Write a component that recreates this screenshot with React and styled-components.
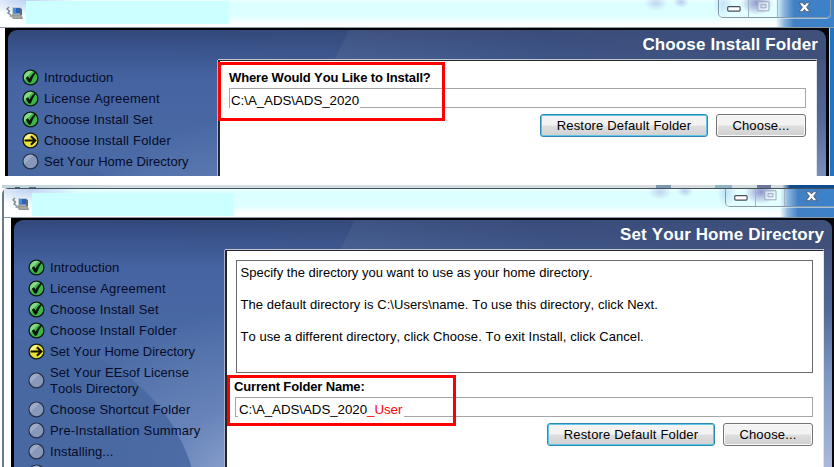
import React from "react";
import styled, { createGlobalStyle } from "styled-components";

const Global = createGlobalStyle`
  * { box-sizing: border-box; }
  body { margin: 0; background: #fff; overflow: hidden; }
`;

const Page = styled.main`
  display: flex;
  flex-direction: column;
  gap: 9px;
  width: 834px;
  height: 467px;
  overflow: hidden;
  background: #fff;
  color: #000;
  font: 13px/15px "Liberation Sans", Arial, sans-serif;
  font-kerning: none;
  white-space: pre;
`;

const Shot = styled.section`
  flex: none;
  height: ${(p) => p.$height}px;
  margin-left: ${(p) => p.$left}px;
  overflow: hidden;
`;

const Desktop = styled.div`
  height: 3px;
  background:
    linear-gradient(90deg, transparent 13px, #51616c 13px 18px, transparent 18px 27px, #5e6e79 27px 34px, transparent 34px) 0 2px / 100% 1px no-repeat,
    linear-gradient(90deg, transparent 654px, #7d98ae 654px 669px, transparent 669px 713px, #8fb4c2 713px 730px, transparent 730px 755px, #6d769c 755px 769px, transparent 769px),
    linear-gradient(90deg, #bfd3df 0, #d3dde2 120px, #d5dcdf 780px, #0d4c8e 788px);
`;

const Glass = styled.div`
  height: 100%;
  display: flex;
  flex-direction: column;
  border-left: ${(p) => (p.$framed ? "2px solid #6c7a83" : "0")};
  border-top: ${(p) => (p.$framed ? "1px solid #43525c" : "0")};
  border-radius: ${(p) => (p.$framed ? "6px 0 0 0" : "0")};
  background: #fff;
`;

const TitleBar = styled.header`
  flex: none;
  display: flex;
  align-items: flex-start;
  height: ${(p) => p.$height}px;
  border-bottom: 1px solid #8c9aa3;
  background:
    radial-gradient(ellipse 12px 8px at 656px 3px, #aebde8a0, transparent),
    radial-gradient(ellipse 8px 6px at 681px 2px, #a4b0e6a0, transparent),
    radial-gradient(ellipse 10px 14px at 723px 4px, #a5cef0b0, transparent),
    radial-gradient(ellipse 16px 12px at 757px 3px, #747fc2, transparent),
    linear-gradient(90deg, transparent 776px, #8cb6de 784px, #4280c4 794px, #3b82ca 100%),
    radial-gradient(ellipse 50px 16px at 26px 0, #bed0f3, transparent),
    linear-gradient(90deg, #fff 0, transparent 60px),
    linear-gradient(180deg, #ecffff 0, #dcffff 4px, #deffff 60%, #fafeff 84%, #fff);
`;

const AppIcon = styled.svg`
  flex: none;
  width: 18px;
  height: 16px;
  margin: ${(p) => p.$top}px 2px 0 ${(p) => p.$left}px;
`;

const Redacted = styled.div`
  width: ${(p) => p.$width}px;
  height: 23px;
  margin-top: ${(p) => p.$top}px;
  background: #cff;
`;

const Caption = styled.div`
  display: grid;
  grid-template-columns: 30px 29px 52px;
  height: 18px;
  margin-left: auto;
  margin-right: ${(p) => p.$right}px;
  border: 1px solid #8499aa;
  border-top: 0;
  border-radius: 0 0 5px 5px;
  box-shadow: 0 1px 0 #ffffff80;
`;

const CaptionKey = styled.span`
  display: flex;
  justify-content: center;
  align-items: flex-end;
  padding-bottom: ${(p) => (p.$last ? 4 : 5)}px;
  border-right: ${(p) => (p.$last ? "0" : "1px solid #a2b3c4")};
  background: ${(p) => (p.$last ? "transparent" : "#ffffff30")};
`;

const Gutters = styled.div`
  flex: 1;
  display: flex;
  min-height: 0;
  padding: 0 ${(p) => p.$right}px 0 ${(p) => p.$left}px;
  background: linear-gradient(90deg, #fff 800px, #b9d7ee 829px, #b9d7ee 830px, #2274c3 830px);
`;

const Frame = styled.div`
  flex: 1;
  padding: 2px ${(p) => p.$right}px 0 3px;
  background: linear-gradient(90deg, #000 0, #05070c 100%);
`;

const Panel = styled.div`
  height: 100%;
  border-radius: 9px 9px 0 0;
  background:
    radial-gradient(circle at 6px 300px, #4767a1 0, #4767a1d8 179px, transparent 180px),
    radial-gradient(circle at 90px -100px, transparent 269px, #ffffff0c 270px, transparent 460px) 0 0 / 100% 30px no-repeat,
    linear-gradient(90deg, transparent 150px, #3f507a80 520px, #3f507a 100%) 0 0 / 100% 30px no-repeat,
    linear-gradient(90deg, transparent 0, transparent 805px, #46557f 810px) 0 0 / 100% 60px no-repeat,
    radial-gradient(circle 170px at 225px 260px, #8da4d1 0, #7690c290 70px, transparent 170px),
    linear-gradient(180deg, #32487b 0, #3b5690 22px, #4563a0 48px, #4868a4 100px, #4e6da7 150px, #5a78b0 247px);
`;

const Heading = styled.h1`
  height: 29px;
  margin: 0;
  padding: 5px ${(p) => p.$right}px 0 0;
  color: #fff;
  font-size: 17px;
  line-height: 20px;
  letter-spacing: ${(p) => p.$track}px;
  text-align: right;
`;

const Body = styled.div`
  display: grid;
  grid-template-columns: ${(p) => p.$side}px 599px 1fr;
  height: calc(100% - 29px);
`;

const RightEdge = styled.div`
  background: linear-gradient(180deg, #45547f 0, #536898 60px, #8298c4 130px, #a9b8da 216px);
`;

const Steps = styled.ol`
  margin: 0;
  padding: 8px 0 0 14px;
  list-style: none;
`;

const Step = styled.li`
  display: flex;
  align-items: center;
  gap: 5px;
  height: ${(p) => (p.$tall ? 37 : 21)}px;
  color: #060c28;
  letter-spacing: ${(p) => p.$track}px;
  line-height: 16px;
`;

const Bullet = styled.svg`
  flex: none;
  width: 17px;
  height: 17px;
  margin-bottom: 1px;
`;

const Content = styled.div`
  min-height: 0;
  margin-top: 1px;
  padding: 0 10px 0 ${(p) => p.$left}px;
  border: solid #23262f;
  border-width: 1px 1px 0 2px;
  border-right-color: #dfe3ea;
  box-shadow: 0 -1px 0 #c3c7cc, -1px 0 0 #aab4c8;
  background: #fff;
`;

const Message = styled.div`
  height: 113px;
  margin: 9px 0 0 1px;
  padding: 4px 3.5px;
  border: 1px solid #696b70;
  line-height: 16px;
`;

const Line = styled.p`
  margin: 0 0 16px;
  letter-spacing: ${(p) => p.$track}px;
`;

const Field = styled.div`
  position: relative;
  padding-top: ${(p) => p.$top}px;
`;

const Label = styled.div`
  height: 18px;
  margin-left: ${(p) => p.$shift}px;
  font-weight: bold;
  letter-spacing: ${(p) => p.$track}px;
`;

const Input = styled.div`
  height: 20px;
  border: 1px solid #a6a6a6;
`;

const Value = styled.span`
  display: block;
  width: ${(p) => p.$width}px;
  height: 19px;
  margin-left: ${(p) => p.$left}px;
  padding: 3px 0 0 1px;
  background: #fff;
  font-size: 13.33px;
  letter-spacing: -0.05px;
  line-height: 17px;
`;

const Added = styled.span`
  color: #f00;
`;

const Highlight = styled.div`
  position: absolute;
  left: ${(p) => p.$left}px;
  top: ${(p) => p.$top}px;
  width: ${(p) => p.$width}px;
  height: ${(p) => p.$height}px;
  border: 3px solid #f00;
`;

const Actions = styled.div`
  display: flex;
  justify-content: flex-end;
  gap: 8px;
  margin-top: 6px;
`;

const Button = styled.button`
  width: ${(p) => p.$width}px;
  height: 23px;
  padding: 0;
  border: 1px solid ${(p) => (p.$focus ? "#2f88ae" : "#747474")};
  border-radius: 3px;
  box-shadow: inset 0 0 0 1px ${(p) => (p.$focus ? "#62c6ea" : "#fafafa")};
  background: linear-gradient(#f3f3f3 0 48%, #dfdfdf 52%, #d0d0d0);
  color: #000;
  font: inherit;
  letter-spacing: 0.17px;
`;

function StepIcon({ state }) {
  const fill = { done: "#3fb548", current: "#eadf38", todo: "#8798bb" }[state];
  return (
    <Bullet viewBox="0 0 16 16">
      <circle cx="8" cy="8" r="7" fill={fill} stroke={state === "todo" ? "#26304a" : "#0b1a18"} strokeWidth="1.2" />
      {state === "todo" && <path d="M2.2 10.5 10.8 2.1A6.4 6.4 0 0 0 2.2 10.5Z" fill="#9dabc7" />}
      {state === "done" && (
        <>
          <path d="M2.3 10 10 2A6.2 6.2 0 0 0 2.3 10Z" fill="#8bd78a" />
          <path d="M4 8.2 5.6 7.3 7.1 9.6Q9 5.6 12.1 3L12.6 3.6Q9.8 7.4 8 12.4H6.4Z" fill="#061108" stroke="#061108" strokeWidth=".7" />
        </>
      )}
      {state === "current" && (
        <>
          <path d="M2.3 9.5 9.5 2A6.2 6.2 0 0 0 2.3 9.5Z" fill="#faf58c" />
          <path d="M2.4 8H12.4M8.4 4 12.6 8 8.4 12" fill="none" stroke="#111005" strokeWidth="1.9" />
        </>
      )}
    </Bullet>
  );
}

function ComputerIcon({ top, left }) {
  return (
    <AppIcon viewBox="0 0 18 16" $top={top} $left={left}>
      <path d="M3 2 1 4 3.5 6 2 8 5 10" fill="none" stroke="#7b858c" strokeWidth="1.4" />
      <path d="M2 8 6 10 5 12Z" fill="#9aa3a8" />
      <path d="M6 2H15V10H6Z" fill="#c4ccd3" />
      <path d="M7 3H14V8.5H7Z" fill="#2766bd" />
      <path d="M7 3H10V8.5H7Z" fill="#4c8ad6" />
      <path d="M14 3 16 4V10H14Z" fill="#606a75" />
      <path d="M6 10H15L16.5 13.5H7Z" fill="#aaa79f" stroke="#77777a" strokeWidth=".7" />
      <path d="M3.5 11 8 12.5" stroke="#9c9fa2" strokeWidth="1.2" />
    </AppIcon>
  );
}

function CaptionButtons({ right }) {
  return (
    <Caption $right={right}>
      <CaptionKey>
        <svg width="14" height="6" viewBox="0 0 14 6">
          <rect x=".7" y=".7" width="12.4" height="4.4" rx="1" fill="#fff" stroke="#47505f" strokeWidth="1.2" />
        </svg>
      </CaptionKey>
      <CaptionKey>
        <svg width="13" height="11" viewBox="0 0 13 11">
          <path d="M.8.8H12V9.8H.8ZM4 3.7H9V6.8H4Z" fill="#ffffff80" stroke="#98a8bd" />
        </svg>
      </CaptionKey>
      <CaptionKey $last>
        <svg width="13" height="11" viewBox="0 0 13 11">
          <path d="M1 .8H4.5L6.5 3 8.5.8H12L8.6 5.2 12 9.7H8.4L6.5 7.4 4.6 9.7H1L4.4 5.2Z" fill="#fff" stroke="#4b5971" strokeWidth=".9" />
        </svg>
      </CaptionKey>
    </Caption>
  );
}

function StepList({ steps }) {
  return (
    <Steps>
      {steps.map(([state, text, track]) => (
        <Step key={text} $track={track} $tall={text.includes("\n")}>
          <StepIcon state={state} />
          <span>{text}</span>
        </Step>
      ))}
    </Steps>
  );
}

function FolderActions() {
  return (
    <Actions>
      <Button $width={168} $focus>Restore Default Folder</Button>
      <Button $width={90}>Choose...</Button>
    </Actions>
  );
}

const installSteps = [
  ["done", "Introduction", 0.12],
  ["done", "License Agreement", 0.22],
  ["done", "Choose Install Set", 0.18],
  ["current", "Choose Install Folder", 0.2],
  ["todo", "Set Your Home Directory", 0],
];

const homeSteps = [
  ["done", "Introduction", 0.12],
  ["done", "License Agreement", 0.22],
  ["done", "Choose Install Set", 0.18],
  ["done", "Choose Install Folder", 0.2],
  ["current", "Set Your Home Directory", 0.02],
  ["todo", "Set Your EEsof License\nTools Directory", 0.08],
  ["todo", "Choose Shortcut Folder", 0.14],
  ["todo", "Pre-Installation Summary", 0.19],
  ["todo", "Installing...", 0.1],
  ["todo", "", 0],
];

export default function App() {
  return (
    <Page>
      <Global />
      <Shot $height={176} $left={0}>
        <Glass>
          <TitleBar $height={28}>
            <ComputerIcon top={5} left={6} />
            <Redacted $width={203} $top={1} />
            <CaptionButtons right={3} />
          </TitleBar>
          <Gutters $left={5} $right={5}>
            <Frame $right={3}>
              <Panel>
                <Heading $right={8} $track={0.13}>Choose Install Folder</Heading>
                <Body $side={210}>
                  <StepList steps={installSteps} />
                  <Content $left={9}>
                    <Field $top={9}>
                      <Label $track={-0.13} $shift={0}>Where Would You Like to Install?</Label>
                      <Input><Value $left={0} $width={130}>C:\A_ADS\ADS_2020</Value></Input>
                      <Highlight $left={-11} $top={1} $width={227} $height={59} />
                    </Field>
                    <FolderActions />
                  </Content>
                  <RightEdge />
                </Body>
              </Panel>
            </Frame>
          </Gutters>
        </Glass>
      </Shot>
      <Shot $height={282} $left={2}>
        <Desktop />
        <Glass $framed>
          <TitleBar $height={29}>
            <ComputerIcon top={7} left={8} />
            <Redacted $width={202} $top={4} />
            <CaptionButtons right={-4} />
          </TitleBar>
          <Gutters $left={7} $right={0}>
            <Frame $right={2}>
              <Panel>
                <Heading $right={8} $track={0.12}>Set Your Home Directory</Heading>
                <Body $side={211}>
                  <StepList steps={homeSteps} />
                  <Content $left={8}>
                    <Message>
                      <Line $track={0.005}>Specify the directory you want to use as your home directory.</Line>
                      <Line $track={0.065}>The default directory is C:\Users\name. To use this directory, click Next.</Line>
                      <Line $track={0.05}>To use a different directory, click Choose. To exit Install, click Cancel.</Line>
                    </Message>
                    <Field $top={6}>
                      <Label $track={-0.15} $shift={-1}>Current Folder Name:</Label>
                      <Input><Value $left={2} $width={166}>C:\A_ADS\ADS_2020<Added>_User</Added></Value></Input>
                      <Highlight $left={-8} $top={2} $width={229} $height={51} />
                    </Field>
                    <FolderActions />
                  </Content>
                  <RightEdge />
                </Body>
              </Panel>
            </Frame>
          </Gutters>
        </Glass>
      </Shot>
    </Page>
  );
}
